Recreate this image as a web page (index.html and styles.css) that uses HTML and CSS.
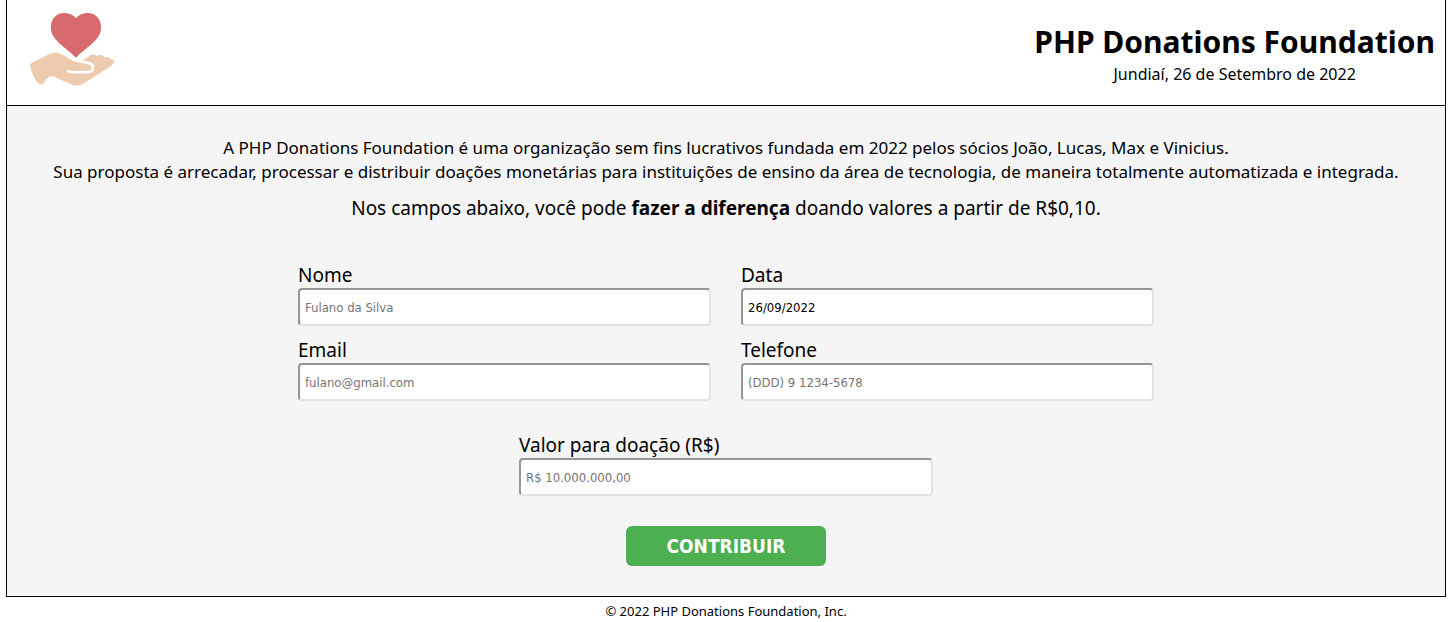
FILE: index.html
```html
<!DOCTYPE html>
<html lang="pt-BR">
<head>
<meta charset="utf-8">
<meta name="viewport" content="width=device-width, initial-scale=1">
<title>PHP Donations Foundation</title>
<link rel="stylesheet" href="styles.css">
</head>
<body>
<div class="page">
  <header class="header">
    <svg class="logo" viewBox="0 0 88 76" aria-hidden="true">
      <path fill="#d66a6c" d="M48 46.500C41 38 22.500 29.500 22.500 15.500C22.500 7 28.500 1 36 1C41.500 1 46 3.500 48 6.500C50 3.500 54.500 1 60 1C67.500 1 73.500 7 73.500 15.500C73.500 29.500 55 38 48 46.500Z"/>
      <path fill="#edcbae" d="M1.500 53.500C1.500 52.500 2.500 52 3.500 51.500L18 44C23 41.500 27 40 31.500 42L45 49.500C47 50.500 48.500 51 51 51H61C65.500 51 68 54 67 58C66.500 60 65 61.500 62 61.500H41C39 61.500 38 60.500 38 59.500C38 57.500 40 58.500 44 59.500H60C64.500 60 65.500 54.500 61 53.500L52.500 50.500L61 45C63 43 68 42 69.500 45C72 43 76 43 77 46.500C79 44.500 82 45 82.500 48C85 47 87 49 86.500 51C86 52.500 85 53.500 83 55L56 72.500C51 75.500 46 75 41 72.500L28 66.500C22 63.500 19.500 66 16.500 70.500C14.500 74 11.500 74.500 8.500 71C5 66 1.500 57 1.500 53.500Z"/>
      <path fill="none" stroke="#fff" stroke-width="2.800" stroke-linecap="round" stroke-linejoin="round" d="M40 60C43 61 46 61 50 61H60C66.500 61 67.500 52.500 60 51.500C54 50.500 50 50 45 47"/>
    </svg>
    <div class="brand">
      <h1 class="title">PHP Donations Foundation</h1>
      <p class="date">Jundiaí, 26 de Setembro de 2022</p>
    </div>
  </header>
  <main class="main">
    <p class="intro">A PHP Donations Foundation é uma organização sem fins lucrativos fundada em 2022 pelos sócios João, Lucas, Max e Vinicius.<br>Sua proposta é arrecadar, processar e distribuir doações monetárias para instituições de ensino da área de tecnologia, de maneira totalmente automatizada e integrada.</p>
    <p class="call">Nos campos abaixo, você pode <strong>fazer a diferença</strong> doando valores a partir de R$0,10.</p>
    <form class="form">
      <div class="fields">
        <div class="field"><label for="nome">Nome</label><input id="nome" type="text" placeholder="Fulano da Silva"></div>
        <div class="field"><label for="data">Data</label><input id="data" type="text" value="26/09/2022"></div>
        <div class="field"><label for="email">Email</label><input id="email" type="email" placeholder="fulano@gmail.com"></div>
        <div class="field"><label for="telefone">Telefone</label><input id="telefone" type="tel" placeholder="(DDD) 9 1234-5678"></div>
      </div>
      <div class="field amount"><label for="valor">Valor para doação (R$)</label><input id="valor" type="text" placeholder="R$ 10.000.000,00"></div>
      <button class="submit" type="submit">CONTRIBUIR</button>
    </form>
  </main>
</div>
<footer class="footer">© 2022 PHP Donations Foundation, Inc.</footer>
</body>
</html>
```
FILE: styles.css
```css
* { box-sizing: border-box; }

body {
  margin: 0 6px;
  background: #fff;
  color: #000;
  font-family: "Comic Sans MS", "Noto Sans", sans-serif;
}

h1, p { margin: 0; }

.page {
  border: 1px solid #000;
  border-top: 0;
}

.header {
  display: flex;
  align-items: flex-start;
  justify-content: space-between;
  padding: 12px 10px 18px 21px;
  border-bottom: 1px solid #000;
}

.logo { width: 88px; height: 75px; }

.brand {
  padding-top: 10px;
  text-align: center;
}

.title {
  font-size: 30px;
  line-height: 40px;
}

.date {
  font-size: 16px;
  line-height: 24px;
}

.main {
  padding: 30px 8px;
  background: #f5f5f5;
  text-align: center;
}

.intro {
  font-size: 17px;
  line-height: 24px;
}

.call {
  margin-top: 12px;
  font-size: 19px;
  line-height: 24px;
}

.form {
  display: flex;
  flex-direction: column;
  align-items: center;
  max-width: 856px;
  margin: 43px auto 0;
}

.fields {
  display: grid;
  grid-template-columns: 1fr 1fr;
  gap: 12px 30px;
  width: 100%;
}

.field {
  display: flex;
  flex-direction: column;
  gap: 1px;
  text-align: left;
}

.field label {
  font-size: 19px;
  line-height: 24px;
}

.field input {
  width: 100%;
  height: 38px;
  padding: 0 5px;
  border: 2px solid;
  border-color: #959595 #e3e3e3 #e3e3e3 #959595;
  border-radius: 4px;
  background: #fff;
  color: #000;
  font: 13px Tahoma, "DejaVu Sans Condensed", sans-serif;
}

.field input::placeholder { color: #757575; }

.amount {
  width: 414px;
  max-width: 100%;
  margin-top: 32px;
}

.submit {
  width: 200px;
  height: 40px;
  margin-top: 30px;
  border: 0;
  border-radius: 6px;
  background: #4caf50;
  color: #fff;
  font: bold 19px Tahoma, "DejaVu Sans Condensed", sans-serif;
}

.footer {
  padding: 4px;
  font-size: 13px;
  line-height: 20px;
  text-align: center;
}
```
